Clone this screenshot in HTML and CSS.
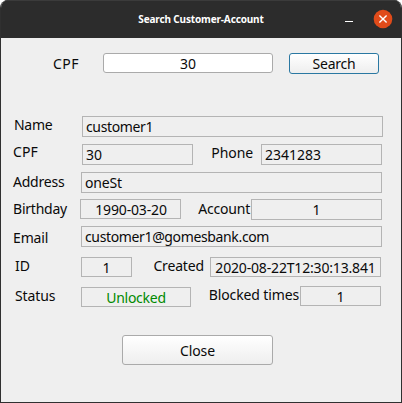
FILE: index.html
```html
<!DOCTYPE html>
<html lang="en">
<head>
<meta charset="utf-8">
<title>Search Customer-Account</title>
<link rel="stylesheet" href="styles.css">
</head>
<body>
<div class="window">
  <header class="titlebar">
    <h1 class="title">Search Customer-Account</h1>
    <svg class="controls" width="60" height="38" viewBox="0 0 60 38">
      <path d="M4 21.5h8" stroke="#fff" stroke-width="1"/>
      <circle cx="42" cy="19" r="9.3" fill="#e04b1a"/>
      <path d="M38.4 15.4l7.2 7.2M45.6 15.4l-7.2 7.2" stroke="#fff" stroke-width="1.4"/>
    </svg>
  </header>
  <main class="content">
    <div class="search-row">
      <label class="search-label" for="cpf">CPF</label>
      <input class="search-input" id="cpf" value="30">
      <button class="button button-search">Search</button>
    </div>
    <div class="row row-name">
      <span class="label">Name</span><span class="field snug">customer1</span>
    </div>
    <div class="row row-cpf">
      <span class="label cpf">CPF</span><span class="field">30</span>
      <span class="label second">Phone</span><span class="field">2341283</span>
    </div>
    <div class="row row-address">
      <span class="label">Address</span><span class="field">oneSt</span>
    </div>
    <div class="row row-birthday">
      <span class="label">Birthday</span><span class="field center">1990-03-20</span>
      <span class="label second">Account</span><span class="field center">1</span>
    </div>
    <div class="row row-email">
      <span class="label">Email</span><span class="field snug">customer1@gomesbank.com</span>
    </div>
    <div class="row row-id">
      <span class="label">ID</span><span class="field center">1</span>
      <span class="label second">Created</span><span class="field center created">2020-08-22T12:30:13.841</span>
    </div>
    <div class="row row-status">
      <span class="label">Status</span><span class="field center unlocked">Unlocked</span>
      <span class="label second">Blocked times</span><span class="field center">1</span>
    </div>
    <button class="button button-close">Close</button>
  </main>
</div>
</body>
</html>
```
FILE: styles.css
```css
* { box-sizing: border-box; }
body {
  margin: 0;
  background: #fff;
  color: #0a0a0a;
  font: 14px/19px "Noto Sans", sans-serif;
}
.window {
  display: flex;
  flex-direction: column;
  width: 402px;
  height: 403px;
  overflow: hidden;
  border: 1px solid #303030;
  border-top: 0;
  border-radius: 8px 8px 0 0;
  background: #efefef;
}
.titlebar {
  display: grid;
  grid-template-columns: 60px 1fr 60px;
  flex: none;
  height: 38px;
  border-top: 1px solid #3b3b3b;
  background: #2c2c2c;
}
.title {
  grid-column: 2;
  margin: 0;
  color: #fff;
  font-size: 10px;
  line-height: 37px;
  letter-spacing: -0.15px;
  text-align: center;
  white-space: nowrap;
}
.controls { margin-top: -1px; }
.content { display: flex; flex-direction: column; }
.search-row { display: flex; align-items: flex-start; height: 78px; padding-top: 15px; }
.search-label { width: 102px; padding-left: 52px; margin-top: 1px; letter-spacing: 0.5px; }
.search-input {
  width: 170px;
  height: 20px;
  padding: 0;
  border: 1px solid #aaa;
  border-radius: 3px;
  background: #fff;
  color: inherit;
  font: inherit;
  text-align: center;
}
.button {
  padding: 0;
  border: 1px solid #aaa;
  border-radius: 3px;
  background: linear-gradient(#fff, #eee);
  color: inherit;
  font: inherit;
}
.button-search {
  width: 90px;
  height: 21px;
  margin-left: 16px;
  border-color: #2a78a2;
  letter-spacing: -0.25px;
}
.button-close { width: 151px; height: 30px; margin: 28px 0 0 121px; letter-spacing: -0.1px; }

.row { display: grid; align-items: start; height: 21px; }
.label { padding-left: 12px; white-space: nowrap; }
.label.cpf { letter-spacing: 0.1px; }
.second { padding-left: 0; justify-self: end; }
.field {
  height: 21px;
  padding-left: 3px;
  border: 1px solid #b4b4b4;
  white-space: nowrap;
}
.center { padding: 0; text-align: center; }
.snug { letter-spacing: -0.36px; }
.created { letter-spacing: -0.17px; }
.unlocked { color: #008a00; letter-spacing: -0.25px; }

.row-name { grid-template-columns: 81px 301px; }
.row-name .label { padding-left: 13px; margin-top: -1px; letter-spacing: -0.3px; }
.row-cpf { grid-template-columns: 81px 111px 68px 121px; margin-top: 7px; }
.row-cpf .label { margin-top: -2px; }
.row-cpf .second { margin: -1px 8px 0 0; letter-spacing: -0.1px; }
.row-address { grid-template-columns: 80px 301px; margin-top: 7px; }
.row-address .label,
.row-birthday .label { letter-spacing: -0.22px; }
.row-address .field { letter-spacing: -0.15px; }
.row-birthday { grid-template-columns: 79px 101px 70px 131px; margin-top: 6px; }
.row-birthday .field { height: 20px; padding-left: 1px; letter-spacing: -0.15px; }
.row-birthday .field:last-child { height: 21px; padding-left: 0; }
.row-birthday .second { margin-right: 1px; }
.row-email { grid-template-columns: 80px 301px; margin-top: 6px; }
.row-email .label { margin-top: 2px; letter-spacing: -0.15px; }
.row-id { grid-template-columns: 80px 51px 78px 171px; margin-top: 10px; }
.row-id .label { margin-top: -1px; padding-left: 14px; }
.row-id .second { margin-right: 6px; padding-left: 0; letter-spacing: -0.15px; }
.row-id .field,
.row-status .field { height: 20px; }
.row-status { grid-template-columns: 80px 110px 109px 81px; margin-top: 8px; }
.row-status .label { padding-left: 14px; letter-spacing: -0.13px; }
.row-status .second { margin: -1px 1px 0 0; padding-left: 0; }
.row-status .unlocked { margin-top: 1px; }
```
